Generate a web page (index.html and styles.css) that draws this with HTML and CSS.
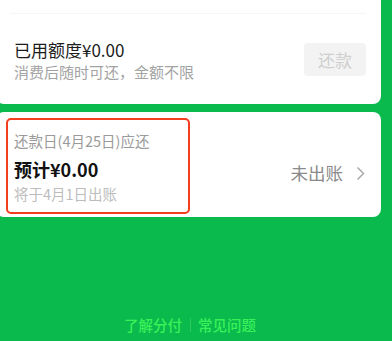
FILE: index.html
```html
<!DOCTYPE html>
<html lang="zh-CN">
<head>
<meta charset="utf-8">
<link rel="stylesheet" href="styles.css">
</head>
<body>
<div class="page">
  <section class="card card-top">
    <div class="divider"></div>
    <div class="row">
      <div class="info">
        <div class="title">已用额度¥0.00</div>
        <div class="sub">消费后随时可还，金额不限</div>
      </div>
      <button class="repay">还款</button>
    </div>
  </section>
  <section class="card card-bill">
    <div class="bill-box">
      <div class="due">还款日(4月25日)应还</div>
      <div class="amount">预计¥0.00</div>
      <div class="note">将于4月1日出账</div>
    </div>
    <div class="status">
      <span>未出账</span>
      <svg class="chev" width="9" height="15" viewBox="0 0 9 15"><polyline points="1.5,1.5 7.5,7.5 1.5,13.5" fill="none" stroke="#aaaaaa" stroke-width="1.5"/></svg>
    </div>
  </section>
  <footer class="links">
    <span>了解分付</span>
    <i class="sep"></i>
    <span>常见问题</span>
  </footer>
</div>
</body>
</html>
```
FILE: styles.css
```css
html, body {
  margin: 0;
  padding: 0;
}
body {
  width: 392px;
  height: 341px;
  overflow: hidden;
  background: #0aba4d;
  font-family: "Noto Sans CJK SC", "Noto Sans", sans-serif;
}
.page {
  height: 341px;
  display: flex;
  flex-direction: column;
}
.card {
  background: #ffffff;
  margin: 0 11px 0 -4px;
}
.card-top {
  border-radius: 0 0 8px 8px;
  padding: 13px 15px 22px 18px;
}
.divider {
  height: 1px;
  background: #f6f6f6;
  margin: 0 0 0 -4px;
}
.row {
  display: flex;
  align-items: center;
  justify-content: space-between;
  margin-top: 23.5px;
}
.title {
  font-size: 17px;
  line-height: 24px;
  color: #1c1c1c;
}
.sub {
  font-size: 15px;
  line-height: 20px;
  color: #a3a3a3;
  margin-top: 0.5px;
}
.repay {
  width: 62px;
  height: 33px;
  border: none;
  border-radius: 4px;
  background: #f3f3f3;
  color: #cfcfcf;
  font-family: inherit;
  font-size: 17px;
  padding: 0;
}
.card-bill {
  margin-top: 8px;
  height: 105px;
  box-sizing: border-box;
  border-radius: 8px;
  padding: 6px 16px 3px 10px;
  display: flex;
  align-items: flex-start;
  justify-content: space-between;
}
.bill-box {
  width: 184px;
  height: 96px;
  box-sizing: border-box;
  border: 2px solid #f43d1c;
  border-radius: 5px;
  padding: 11px 6px 8px 6px;
}
.due {
  font-size: 14.5px;
  line-height: 20px;
  color: #9a9a9a;
}
.amount {
  margin-top: 5px;
  font-size: 18px;
  line-height: 26px;
  font-weight: 700;
  color: #111111;
}
.note {
  margin-top: 2px;
  font-size: 14.5px;
  line-height: 20px;
  color: #bdbdbd;
}
.status {
  display: flex;
  align-items: center;
  gap: 13px;
  margin-top: 43px;
  font-size: 17.5px;
  line-height: 24px;
  color: #8a8a8a;
}
.chev {
  display: block;
}
.links {
  margin-top: auto;
  padding: 0 12px 6px 0;
  display: flex;
  justify-content: center;
  align-items: center;
  font-size: 14.5px;
  font-weight: 500;
  line-height: 20px;
  color: #3af158;
}
.sep {
  width: 1px;
  height: 14px;
  background: #2cc85c;
  margin: 0 7.5px;
}
```
